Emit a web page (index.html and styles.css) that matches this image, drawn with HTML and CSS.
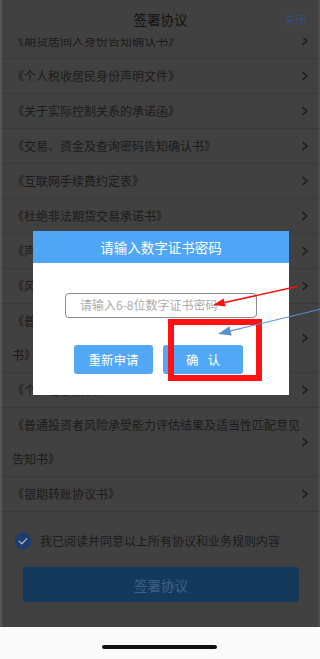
FILE: index.html
```html
<!DOCTYPE html>
<html lang="zh-CN">
<head>
<meta charset="utf-8">
<title>签署协议</title>
<link rel="stylesheet" href="styles.css">
</head>
<body>
<div class="screen">
  <header class="header">
    <span></span>
    <h1 class="title">签署协议</h1>
    <span class="close">关闭</span>
  </header>
  <div class="list">
    <ul class="rows">
      <li class="row"><span class="txt">《期货居间人身份告知确认书》</span><svg class="chev" viewBox="0 0 8 10"><polyline points="1.5,1 6,5 1.5,9"/></svg></li>
      <li class="row"><span class="txt">《个人税收居民身份声明文件》</span><svg class="chev" viewBox="0 0 8 10"><polyline points="1.5,1 6,5 1.5,9"/></svg></li>
      <li class="row"><span class="txt">《关于实际控制关系的承诺函》</span><svg class="chev" viewBox="0 0 8 10"><polyline points="1.5,1 6,5 1.5,9"/></svg></li>
      <li class="row"><span class="txt">《交易、资金及查询密码告知确认书》</span><svg class="chev" viewBox="0 0 8 10"><polyline points="1.5,1 6,5 1.5,9"/></svg></li>
      <li class="row"><span class="txt">《互联网手续费约定表》</span><svg class="chev" viewBox="0 0 8 10"><polyline points="1.5,1 6,5 1.5,9"/></svg></li>
      <li class="row"><span class="txt">《杜绝非法期货交易承诺书》</span><svg class="chev" viewBox="0 0 8 10"><polyline points="1.5,1 6,5 1.5,9"/></svg></li>
      <li class="row"><span class="txt">《声明与承诺书》</span><svg class="chev" viewBox="0 0 8 10"><polyline points="1.5,1 6,5 1.5,9"/></svg></li>
      <li class="row"><span class="txt">《风险揭示书》</span><svg class="chev" viewBox="0 0 8 10"><polyline points="1.5,1 6,5 1.5,9"/></svg></li>
      <li class="row"><span class="txt">《普通投资者适当性匹配意见及风险揭示告知并确认书》</span><svg class="chev" viewBox="0 0 8 10"><polyline points="1.5,1 6,5 1.5,9"/></svg></li>
      <li class="row"><span class="txt">《个人信息授权书》</span><svg class="chev" viewBox="0 0 8 10"><polyline points="1.5,1 6,5 1.5,9"/></svg></li>
      <li class="row"><span class="txt">《普通投资者风险承受能力评估结果及适当性匹配意见告知书》</span><svg class="chev" viewBox="0 0 8 10"><polyline points="1.5,1 6,5 1.5,9"/></svg></li>
      <li class="row"><span class="txt">《银期转账协议书》</span><svg class="chev" viewBox="0 0 8 10"><polyline points="1.5,1 6,5 1.5,9"/></svg></li>
    </ul>
  </div>
  <div class="agree">
    <svg class="check" viewBox="0 0 18 18"><circle cx="9" cy="9" r="8.5"/><polyline points="5.2,9.3 7.9,11.8 12.8,6.6"/></svg>
    <span class="agree-txt">我已阅读并同意以上所有协议和业务规则内容</span>
  </div>
  <div class="sign">签署协议</div>
  <div class="spacer"></div>
  <div class="homebar"><span class="indicator"></span></div>
</div>

<div class="modal">
  <div class="modal-head">请输入数字证书密码</div>
  <div class="modal-body">
    <div class="input">请输入6-8位数字证书密码</div>
    <div class="btns">
      <div class="btn btn-left">重新申请</div>
      <div class="btn btn-right">确 认</div>
    </div>
  </div>
</div>

<div class="redbox"></div>
<svg class="arrows" viewBox="0 0 320 659" width="320" height="659">
  <line x1="297" y1="286.5" x2="224.7" y2="302.5" stroke="#f01515" stroke-width="1.6"/>
  <polygon points="213,305 225.8,306.6 223.6,298.4" fill="#f01515"/>
  <line x1="321" y1="309" x2="230.6" y2="330.9" stroke="#5b8fce" stroke-width="1.1"/>
  <polygon points="218,334 231.8,335.6 229.4,326.2" fill="#5b8fce"/>
</svg>
</body>
</html>
```

FILE: styles.css
```css
* { box-sizing: border-box; }
html, body {
  margin: 0;
  padding: 0;
}
body {
  width: 320px;
  height: 659px;
  overflow: hidden;
  position: relative;
  background: #414141;
  font-family: "Noto Sans CJK SC", "Noto Sans", sans-serif;
  color: #1b1b1b;
}
.screen {
  height: 659px;
  display: flex;
  flex-direction: column;
  border-left: 2px solid #575757;
  border-right: 2px solid #4c4c4c;
}
.header {
  height: 38px;
  flex: none;
  display: grid;
  grid-template-columns: 1fr auto 1fr;
  align-items: start;
  padding-top: 9px;
}
.title {
  margin: 0;
  font-size: 13.5px;
  line-height: 20px;
  font-weight: 400;
  color: #121212;
  padding-left: 1px;
}
.close {
  justify-self: end;
  margin-right: 11px;
  font-size: 11.5px;
  line-height: 20px;
  color: #33507d;
}
.list {
  height: 474px;
  flex: none;
  overflow: hidden;
}
.rows {
  list-style: none;
  margin: -14px 0 0;
  padding: 0;
}
.row {
  display: flex;
  align-items: center;
  padding: 0 9px 0 10px;
  border-bottom: 1px solid #393939;
  font-size: 12px;
  line-height: 34px;
}
.txt {
  flex: 1;
  min-width: 0;
}
.chev {
  width: 8px;
  height: 10px;
  flex: none;
  fill: none;
  stroke: #1a1a1a;
  stroke-width: 1.3;
}
.agree {
  margin-top: 20px;
  height: 18px;
  display: flex;
  align-items: center;
  gap: 8px;
  padding-left: 12px;
}
.check {
  width: 18px;
  height: 18px;
  flex: none;
}
.check circle { fill: #1e3d6f; }
.check polyline {
  fill: none;
  stroke: #a4b3ca;
  stroke-width: 1.3;
  stroke-linecap: round;
  stroke-linejoin: round;
}
.agree-txt {
  font-size: 12px;
  line-height: 18px;
  color: #1b1b1b;
}
.sign {
  margin: 17px 19px 0 21px;
  height: 35px;
  border-radius: 3px;
  background: #133a5d;
  color: #3f6184;
  font-size: 13.5px;
  display: flex;
  align-items: center;
  justify-content: center;
}
.spacer { flex: 1; }
.homebar {
  height: 32px;
  flex: none;
  margin: 0 -2px;
  background: #fafafa;
  display: flex;
  justify-content: center;
  padding-top: 18px;
}
.indicator {
  width: 115px;
  height: 4px;
  border-radius: 2px;
  background: #111;
  margin-left: -2px;
}

/* modal dialog overlay */
.modal {
  position: absolute;
  left: 33px;
  top: 231px;
  width: 256px;
  height: 164px;
  background: #fff;
}
.modal-head {
  height: 32px;
  background: #50a6f6;
  color: #fff;
  font-size: 13.5px;
  display: flex;
  align-items: center;
  justify-content: center;
}
.modal-body {
  padding: 30px 0 0 32px;
}
.input {
  width: 192px;
  height: 25px;
  border: 1.5px solid #8a8a8a;
  border-radius: 4px;
  padding-left: 14px;
  font-size: 12px;
  line-height: 22px;
  color: #ababab;
}
.btns {
  display: flex;
  gap: 10px;
  margin-top: 27px;
  padding-left: 9px;
}
.btn {
  height: 29px;
  border-radius: 3px;
  background: #52a8f7;
  color: #fff;
  font-size: 12.5px;
  display: flex;
  align-items: center;
  justify-content: center;
}
.btn-left { width: 79px; }
.btn-right { width: 80px; word-spacing: 6px; }

/* annotations */
.redbox {
  position: absolute;
  left: 168px;
  top: 319px;
  width: 94px;
  height: 62px;
  border: 6px solid #ff1212;
}
.arrows {
  position: absolute;
  left: 0;
  top: 0;
  pointer-events: none;
}
```
